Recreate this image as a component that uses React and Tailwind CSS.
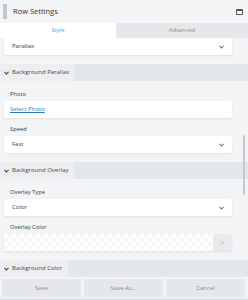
import { X } from 'lucide-react';

const font = { fontFamily: '"Open Sans", "Liberation Sans", sans-serif' };

function Caret({ className = '' }) {
    return (
        <svg width="5" height="4" viewBox="0 0 5 4" className={className}>
            <path d="M0.5 0.8 L2.5 3 L4.5 0.8" fill="none" stroke="currentColor" strokeWidth="1.1" />
        </svg>
    );
}

function SelectBox({ value }) {
    return (
        <div className="h-[17px] bg-white rounded-[2px] shadow-[0_1px_2px_rgba(0,0,0,0.08)] flex items-center justify-between pl-[8px] pr-[8px]">
            <span className="text-[6px] text-[#3a3a3a]">{value}</span>
            <Caret className="text-[#777]" />
        </div>
    );
}

function Field({ label, children, first }) {
    return (
        <div className={first ? '' : 'mt-[7px]'}>
            <div className="h-[8px] leading-[8px] text-[5.8px] text-[#3a3a3a] pl-[6px] mb-[3px]">{label}</div>
            {children}
        </div>
    );
}

function SectionHeader({ title }) {
    return (
        <div className="h-[17px] bg-[#e4e7ea] flex">
            <div className="bg-[#eceef1] flex items-center gap-[3px] pl-[4px] pr-[6px]">
                <Caret className="text-[#444]" />
                <span className="text-[6px] text-[#484848]">{title}</span>
            </div>
        </div>
    );
}

export default function App() {
    return (
        <div className="w-[248px] h-[300px] bg-[#f3f4f6] flex flex-col overflow-hidden relative" style={font}>
            {/* title bar */}
            <div className="h-[23px] flex items-center bg-[#f4f5f7] shrink-0">
                <div className="ml-[3px] w-[4px] h-[15px] bg-[radial-gradient(circle,#c2c5c9_0.7px,transparent_0.9px)] bg-[length:2px_2px]" />
                <span className="ml-[6px] text-[7.5px] text-[#333]">Row Settings</span>
                <div className="ml-auto mr-[5px] w-[7px] h-[6px] border border-[#555] border-t-[2px] rounded-[1px]" />
            </div>

            {/* tabs */}
            <div className="h-[15px] flex shrink-0">
                <div className="w-[116px] bg-white flex items-center justify-center text-[5.8px] text-[#3ba6d6]">Style</div>
                <div className="flex-1 bg-[#e5e7ea] flex items-center justify-center text-[5.8px] text-[#8a8d91]">Advanced</div>
            </div>

            {/* scrolling content */}
            <div className="flex-1 overflow-hidden">
                <div className="pl-[4px] pr-[16px] pb-[9px]">
                    <SelectBox value="Parallax" />
                </div>

                <SectionHeader title="Background Parallax" />
                <div className="pl-[4px] pr-[16px] pt-[9px] pb-[9px]">
                    <Field label="Photo" first>
                        <div className="h-[17px] bg-white rounded-[2px] shadow-[0_1px_2px_rgba(0,0,0,0.08)] flex items-center pl-[6px]">
                            <span className="text-[6px] text-[#2a7db5] underline">Select Photo</span>
                        </div>
                    </Field>
                    <Field label="Speed">
                        <SelectBox value="Fast" />
                    </Field>
                </div>

                <SectionHeader title="Background Overlay" />
                <div className="pl-[4px] pr-[16px] pt-[9px] pb-[9px]">
                    <Field label="Overlay Type" first>
                        <SelectBox value="Color" />
                    </Field>
                    <Field label="Overlay Color">
                        <div className="h-[17px] rounded-[2px] shadow-[0_1px_2px_rgba(0,0,0,0.08)] flex overflow-hidden">
                            <div className="flex-1 bg-white bg-[conic-gradient(#f7f7f7_25%,#fff_0_50%,#f7f7f7_0_75%,#fff_0)] bg-[length:8px_8px]" />
                            <div className="w-[19px] bg-[#e8eaed] flex items-center justify-center">
                                <X className="w-[7px] h-[7px] text-[#a3a7ad]" strokeWidth={1.6} />
                            </div>
                        </div>
                    </Field>
                </div>

                <SectionHeader title="Background Color" />
            </div>

            {/* footer */}
            <div className="shrink-0 grid grid-cols-3 gap-[3px] pl-[2px] pr-[3px] pt-[1px] pb-[1px] border-b-[2px] border-[#e4e7ea]">
                <div className="h-[18px] bg-[#e5e7ea] flex items-center justify-center text-[6px] text-[#8a8d91]">Save</div>
                <div className="h-[18px] bg-[#e5e7ea] flex items-center justify-center text-[6px] text-[#8a8d91]">Save As...</div>
                <div className="h-[18px] bg-[#e5e7ea] flex items-center justify-center text-[6px] text-[#8a8d91]">Cancel</div>
            </div>

            {/* scrollbar thumb */}
            <div className="absolute left-[243px] top-[135px] w-[2px] h-[60px] rounded-full bg-[#c5c9ce]" />
        </div>
    );
}
